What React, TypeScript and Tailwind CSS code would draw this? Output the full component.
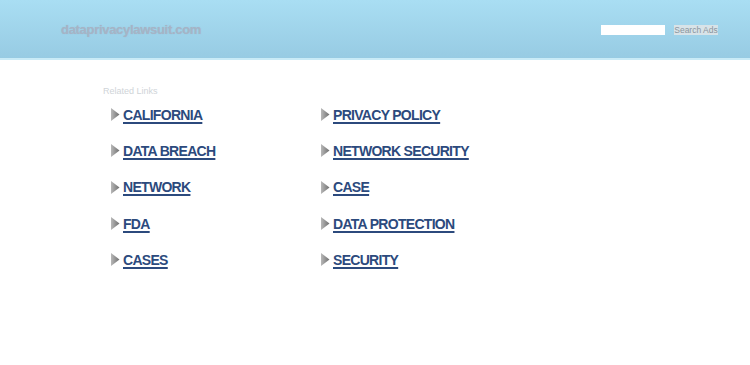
const left = ["CALIFORNIA", "DATA BREACH", "NETWORK", "FDA", "CASES"];
const right = ["PRIVACY POLICY", "NETWORK SECURITY", "CASE", "DATA PROTECTION", "SECURITY"];

function Arrow() {
  return (
    <svg width="9" height="13" viewBox="0 0 9 13" className="shrink-0">
      <defs>
        <linearGradient id="ag" x1="0" y1="0" x2="1" y2="0">
          <stop offset="0" stopColor="#b8b8b8" />
          <stop offset="1" stopColor="#707070" />
        </linearGradient>
      </defs>
      <path d="M0 0 L8.5 6.5 L0 13 Z" fill="url(#ag)" />
    </svg>
  );
}

function LinkRow({ label }: { label: string }) {
  return (
    <div className="flex items-center h-[36.3px] gap-[3px]">
      <Arrow />
      <a href="#" className="text-[14px] tracking-[-0.7px] font-bold text-[#2c4a7d] underline underline-offset-2 decoration-[1.5px] leading-none">
        {label}
      </a>
    </div>
  );
}

export default function App() {
  const rows = left.map((l, i) => [l, right[i]]);
  return (
    <div className="w-[750px] h-[365px] bg-white overflow-hidden" style={{ fontFamily: '"Liberation Sans", Arial, sans-serif' }}>
      {/* header */}
      <header className="h-[60px] bg-gradient-to-b from-[#a9def3] to-[#97cbe3] border-b-2 border-[#c9ebf7] flex items-center justify-between pl-[61px] pr-[32px]">
        <div className="text-[13px] font-bold text-[#a6b4c6] tracking-[-0.3px] pt-[1px]" style={{ textShadow: "0 0 1px rgba(150,170,190,0.6)" }}>
          dataprivacylawsuit.com
        </div>
        <div className="flex items-center gap-[9px] pt-[2px]">
          <input className="w-[64px] h-[10px] bg-white border-0 outline-none" />
          <button className="h-[10px] w-[44px] bg-[#d8e3e8] text-[8.5px] leading-[10px] text-[#8a959e] text-center whitespace-nowrap">Search Ads</button>
        </div>
      </header>

      {/* content */}
      <div className="pl-[103px] pt-[27px]">
        <div className="text-[9px] text-[#cfd4d8] leading-none">Related Links</div>
        <div className="pl-[8px] pt-[0.5px]">
          {rows.map(([a, b]) => (
            <div key={a} className="grid grid-cols-[210px_210px]">
              <LinkRow label={a} />
              <LinkRow label={b} />
            </div>
          ))}
        </div>
      </div>
    </div>
  );
}
